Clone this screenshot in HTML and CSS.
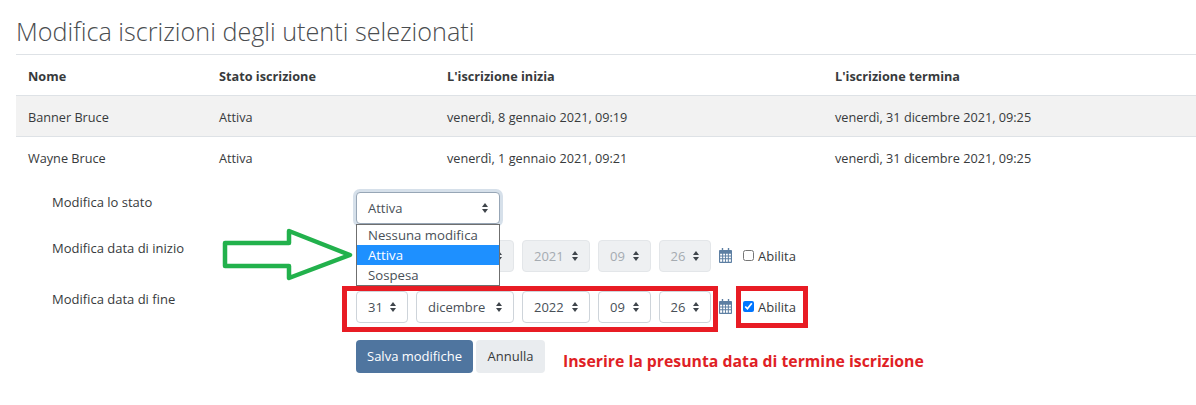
FILE: index.html
```html
<!DOCTYPE html>
<html lang="it">
<head>
    <meta charset="UTF-8">
    <title>Modifica iscrizioni</title>
    <link rel="stylesheet" href="styles.css">
</head>
<body>
    <h2 class="page-title">Modifica iscrizioni degli utenti selezionati</h2>
    <table class="users">
        <thead>
            <tr>
                <th class="col-name">Nome</th>
                <th class="col-status">Stato iscrizione</th>
                <th class="col-start">L'iscrizione inizia</th>
                <th>L'iscrizione termina</th>
            </tr>
        </thead>
        <tbody>
            <tr class="striped">
                <td>Banner Bruce</td>
                <td>Attiva</td>
                <td>venerdì, 8 gennaio 2021, 09:19</td>
                <td>venerdì, 31 dicembre 2021, 09:25</td>
            </tr>
            <tr>
                <td>Wayne Bruce</td>
                <td>Attiva</td>
                <td>venerdì, 1 gennaio 2021, 09:21</td>
                <td>venerdì, 31 dicembre 2021, 09:25</td>
            </tr>
        </tbody>
    </table>

    <form class="edit-form">
        <div class="form-row row-status">
            <div class="form-label">Modifica lo stato</div>
            <div class="controls">
                <div class="select status-select focused">Attiva<span class="caret"></span></div>
            </div>
        </div>
        <div class="form-row row-start">
            <div class="form-label">Modifica data di inizio</div>
            <div class="controls">
                <!-- day and month are covered by the open dropdown -->
                <div class="select day disabled"><span class="caret"></span></div>
                <div class="select month disabled"><span class="caret"></span></div>
                <div class="select year disabled">2021<span class="caret"></span></div>
                <div class="select time disabled">09<span class="caret"></span></div>
                <div class="select time disabled">26<span class="caret"></span></div>
                <svg class="calendar" viewBox="0 0 14 16"><use href="#cal"></use></svg>
                <label class="enable"><input type="checkbox">Abilita</label>
            </div>
        </div>
        <div class="form-row row-end">
            <div class="form-label">Modifica data di fine</div>
            <div class="controls">
                <div class="select day">31<span class="caret"></span></div>
                <div class="select month">dicembre<span class="caret"></span></div>
                <div class="select year">2022<span class="caret"></span></div>
                <div class="select time">09<span class="caret"></span></div>
                <div class="select time">26<span class="caret"></span></div>
                <svg class="calendar" viewBox="0 0 14 16"><use href="#cal"></use></svg>
                <label class="enable"><input type="checkbox" checked>Abilita</label>
            </div>
        </div>
        <div class="form-row buttons-row">
            <div class="controls buttons">
                <button type="button" class="btn btn-primary">Salva modifiche</button>
                <button type="button" class="btn btn-secondary">Annulla</button>
                <span class="note">Inserire la presunta data di termine iscrizione</span>
            </div>
        </div>
    </form>

    <!-- open dropdown and the annotations drawn on top of the screenshot -->
    <ul class="dropdown">
        <li>Nessuna modifica</li>
        <li class="active">Attiva</li>
        <li>Sospesa</li>
    </ul>
    <svg class="arrow" width="136" height="56" viewBox="0 0 136 56">
        <polygon points="4,15 68,15 68,3 129,27 68,50 68,38 4,38" fill="none" stroke="#22b14c" stroke-width="4.5" stroke-linejoin="round"></polygon>
    </svg>
    <div class="mark mark-dates"></div>
    <div class="mark mark-check"></div>

    <svg width="0" height="0" class="defs">
        <symbol id="cal" viewBox="0 0 14 16">
            <path fill="#5d7fa3" fill-rule="evenodd" d="M3 0h1.5v2h5V0H11v2h2a1 1 0 0 1 1 1v12a1 1 0 0 1-1 1H1a1 1 0 0 1-1-1V3a1 1 0 0 1 1-1h2zM1.2 6v2h2.2V6zm3.3 0v2h2V6zm3 0v2h2V6zm3.1 0v2h2.2V6zM1.2 9v2h2.2V9zm3.3 0v2h2V9zm3 0v2h2V9zm3.1 0v2h2.2V9zM1.2 12v2.8h2.2V12zm3.3 0v2.8h2V12zm3 0v2.8h2V12zm3.1 0v2.8h2.2V12z"></path>
        </symbol>
    </svg>
</body>
</html>
```

FILE: styles.css
```css
body {
    margin: 0;
    padding-left: 16px;
    position: relative;
    height: 405px;
    overflow: hidden;
    box-sizing: border-box;
    background-color: #fff;
    color: #373a3c;
    font-family: 'Open Sans', 'Noto Sans', sans-serif;
    font-size: 13px;
}

.page-title {
    margin: 0;
    height: 54px;
    box-sizing: border-box;
    padding-top: 15px;
    font-size: 25.2px;
    line-height: 33px;
    font-weight: 300;
    color: #4a4d50;
}

.users {
    width: 100%;
    border-collapse: collapse;
    table-layout: fixed;
    font-size: 12.7px;
}

.users th,
.users td {
    height: 41px;
    padding: 2px 12px 0;
    box-sizing: border-box;
    text-align: left;
    border-top: 1px solid #dee2e6;
}

.users th {
    font-weight: 700;
}

.col-name { width: 191px; }
.col-status { width: 228px; }
.col-start { width: 388px; }

.striped {
    background-color: #f2f2f2;
}

.edit-form {
    padding: 14px 0 0 36px;
    display: flex;
    flex-direction: column;
}

.form-row {
    display: flex;
    height: 32px;
}

.row-start { margin-top: 16px; }
.row-end { margin-top: 19px; }

.form-label {
    width: 304px;
    padding-top: 1px;
}

.row-start .form-label,
.row-end .form-label {
    padding-top: 0;
    margin-top: -1px;
}

.buttons-row {
    margin: 17px 0 0 304px;
    height: 33px;
}

.controls {
    display: flex;
    align-items: center;
    gap: 8px;
}

.select {
    height: 32px;
    box-sizing: border-box;
    padding: 0 14px 0 11px;
    display: flex;
    align-items: center;
    justify-content: space-between;
    border: 1px solid #ced4da;
    border-radius: 4px;
    background-color: #fff;
    color: #495057;
}

.disabled {
    background-color: #eef0f2;
    color: #a5abb1;
    border-color: #e3e6e9;
}

.status-select { width: 144px; }
.day { width: 52px; }
.month { width: 98px; }
.year { width: 68px; }
.time { width: 52.5px; }

.focused {
    border-color: #97a6b6;
    box-shadow: 0 0 0 3px #d6e0ea;
}

.caret {
    width: 0;
    height: 10px;
    margin-left: auto;
    display: flex;
    flex-direction: column;
    justify-content: space-between;
    align-items: center;
}

.caret::before,
.caret::after {
    content: "";
    border-left: 3.5px solid transparent;
    border-right: 3.5px solid transparent;
}

.caret::before {
    border-bottom: 4px solid #3f454b;
}

.caret::after {
    border-top: 4px solid #3f454b;
}

.calendar {
    width: 13px;
    height: 15px;
}

.enable {
    display: flex;
    align-items: center;
    gap: 4px;
    margin-left: 3px;
}

.enable input {
    width: 11px;
    height: 11px;
    margin: 0;
}

.buttons {
    gap: 3px;
}

.btn {
    height: 33px;
    padding: 0 11px;
    border: none;
    border-radius: 4px;
    font-family: inherit;
    font-size: 13px;
}

.btn-primary {
    width: 117px;
    background-color: #4f759f;
    color: #fff;
}

.btn-secondary {
    width: 69px;
    background-color: #e9ecef;
    color: #373a3c;
}

.note {
    margin-left: 15px;
    padding-top: 10px;
    color: #df1f26;
    font-size: 15.8px;
    font-weight: 700;
    white-space: nowrap;
}

.dropdown {
    position: absolute;
    left: 356px;
    top: 224px;
    width: 144px;
    margin: 0;
    padding: 0;
    box-sizing: border-box;
    list-style: none;
    border: 1px solid #6f6f6f;
    background-color: #fff;
    color: #495057;
    font-size: 13.2px;
}

.dropdown li {
    height: 20px;
    line-height: 20px;
    padding-left: 11px;
}

.dropdown .active {
    background-color: #1e90ff;
    color: #fff;
}

.arrow {
    position: absolute;
    left: 221px;
    top: 228px;
}

.mark {
    position: absolute;
    box-sizing: border-box;
    border: 5px solid #e81c24;
}

.mark-dates {
    left: 342px;
    top: 286px;
    width: 376px;
    height: 46px;
}

.mark-check {
    left: 736px;
    top: 286px;
    width: 72px;
    height: 42px;
}

.defs {
    position: absolute;
}
```
